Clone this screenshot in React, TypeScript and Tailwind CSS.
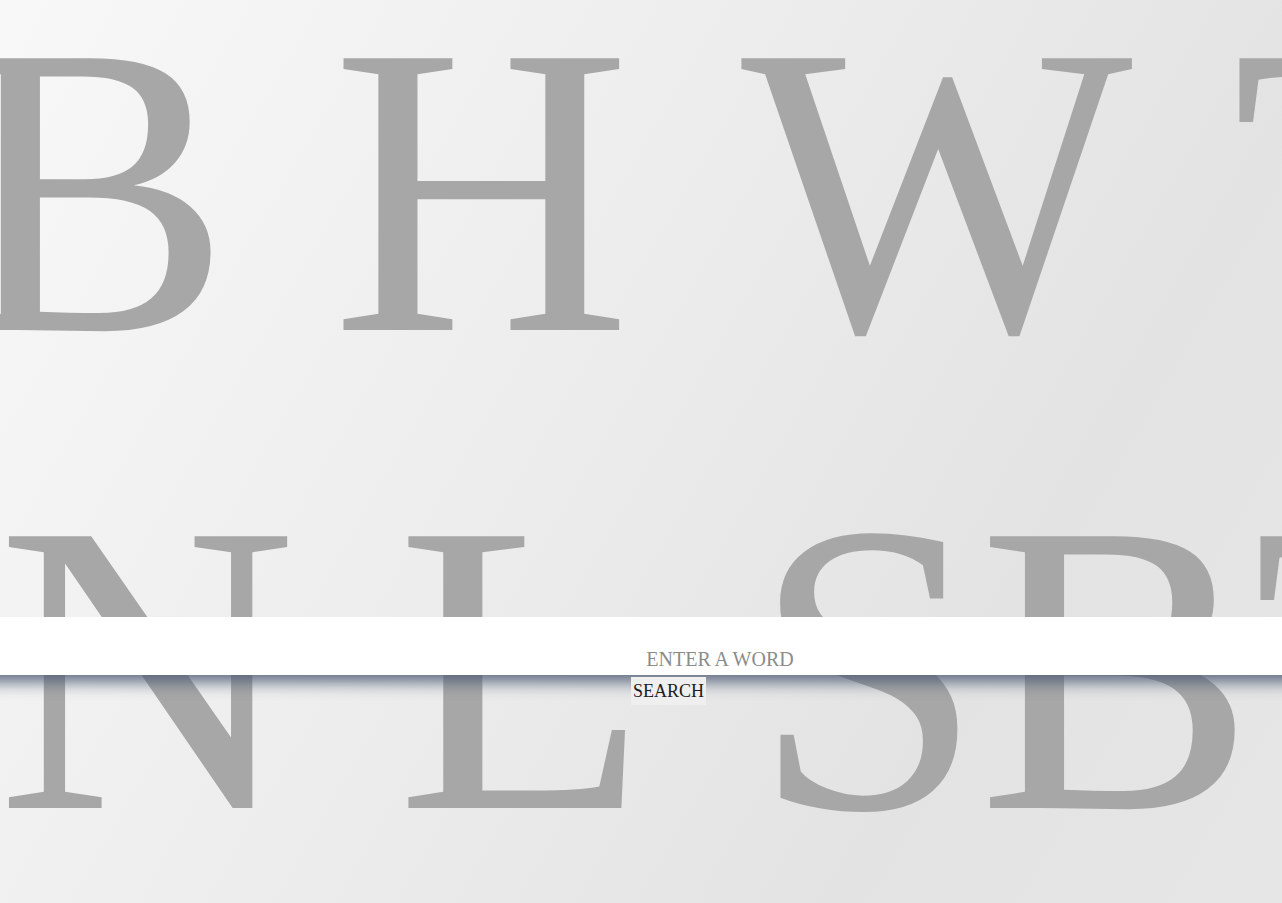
import { useState } from "react";

const SearchPage = () => {
    const [word, setWord] = useState("");

    return (
        <div className="relative h-[903px] overflow-hidden bg-[linear-gradient(120deg,#f8f8f8_0%,#ececec_45%,#e3e3e3_75%,#e6e6e6_100%)] font-['Liberation_Serif',serif]">
            {/* BIG LETTERS */}
            <div aria-hidden className="select-none whitespace-pre text-[415px] leading-[478px] text-[#a7a7a7] -mt-[49px]">
                <div>
                    <span className="-ml-[46px]">B</span> <span className="-ml-[3px]">H</span> <span className="ml-[6px]">W</span> <span className="ml-[3px]">T</span>
                </div>
                <div>
                    <span className="-ml-[3px]">N</span> <span className="-ml-[4px]">L</span> <span className="ml-[14px]">S</span><span className="-ml-[5px]">B</span><span className="-ml-[2px]">T</span>
                </div>
            </div>

            {/* SEARCH BAR */}
            <form className="absolute left-0 right-0 top-[617px] flex flex-col items-center" onSubmit={(e) => e.preventDefault()}>
                <input
                    value={word}
                    onChange={(e) => setWord(e.target.value)}
                    placeholder="ENTER A WORD"
                    className="relative z-10 w-[calc(100%+60px)] shrink-0 h-[58px] bg-white pl-[158px] pt-[28px] pb-[2px] text-center text-[20px] leading-[28px] text-[#555] placeholder:text-[#8c8c8c] outline-none shadow-[0_13px_16px_-6px_rgba(78,92,118,0.9)]"
                />
                <button className="relative z-20 mt-[2px] ml-[55px] h-[28px] px-[2px] bg-[#efefef] text-[18px] leading-[28px] text-[#1c1c1c]">SEARCH</button>
            </form>
        </div>
    );
};

export default function App() {
    return <SearchPage />;
}
